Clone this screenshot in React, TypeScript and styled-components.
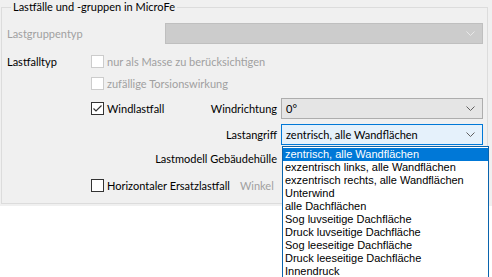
import styled, { createGlobalStyle } from 'styled-components'

const GlobalStyle = createGlobalStyle`
  html, body {
    margin: 0;
    padding: 0;
    background: #ffffff;
  }
  body {
    font-family: Lato, 'Liberation Sans', sans-serif;
    font-size: 11px;
    color: #000000;
  }
`

const Window = styled.div`
  width: 492px;
  height: 277px;
  overflow: hidden;
  background: #ffffff;
`

const Panel = styled.div`
  background: #f0f0f0;
  height: 206px;
  padding: 0 4px 0 1px;
  box-sizing: border-box;
`

const GroupBox = styled.fieldset`
  margin: 0;
  border: 1px solid #dcdcdc;
  padding: 9px 4px 10px 5px;
  height: 204px;
  box-sizing: border-box;
  display: flex;
  flex-direction: column;
`

const Legend = styled.legend`
  padding: 0 2px;
  margin-left: 4px;
  line-height: 14px;
`

const Row = styled.div<{ $h: number; $mt?: number }>`
  display: flex;
  align-items: center;
  height: ${({ $h }) => $h}px;
  margin-top: ${({ $mt }) => $mt ?? 0}px;
  position: relative;
`

const Label = styled.span<{ $disabled?: boolean; $w?: number }>`
  color: ${({ $disabled }) => ($disabled ? '#a0a0a0' : '#000000')};
  width: ${({ $w }) => ($w ? `${$w}px` : 'auto')};
  white-space: nowrap;
  flex-shrink: 0;
`

const SideLabel = styled(Label)<{ $mr: number }>`
  margin-left: auto;
  margin-right: ${({ $mr }) => $mr}px;
`

const CheckRow = styled.label<{ $disabled?: boolean }>`
  display: flex;
  align-items: center;
  gap: 3px;
  color: ${({ $disabled }) => ($disabled ? '#a0a0a0' : '#000000')};
  white-space: nowrap;
`

const Box = styled.span<{ $disabled?: boolean }>`
  width: 13px;
  height: 13px;
  box-sizing: border-box;
  border: 1px solid ${({ $disabled }) => ($disabled ? '#cccccc' : '#333333')};
  background: #ffffff;
  display: inline-flex;
  align-items: center;
  justify-content: center;
  flex-shrink: 0;
`

const Combo = styled.div<{ $variant: 'disabled' | 'normal' | 'focused'; $w: number }>`
  width: ${({ $w }) => $w}px;
  height: 21px;
  box-sizing: border-box;
  display: flex;
  align-items: center;
  justify-content: space-between;
  padding: 0 7px 0 4px;
  position: relative;
  background: ${({ $variant }) =>
    $variant === 'disabled' ? '#cccccc' : $variant === 'focused' ? '#e5f1fb' : '#e5e5e5'};
  border: 1px solid
    ${({ $variant }) =>
      $variant === 'disabled' ? '#bfbfbf' : $variant === 'focused' ? '#0078d7' : '#adadad'};
`

const DropList = styled.ul`
  position: absolute;
  top: 21px;
  left: 0;
  width: 207px;
  margin: 0;
  padding: 1px 0 0 0;
  list-style: none;
  background: #ffffff;
  border: 1px solid #0a64ad;
  box-sizing: border-box;
  font-family: 'Liberation Sans', Arial, sans-serif;
  font-size: 11px;
  z-index: 5;
`

const Item = styled.li<{ $selected?: boolean }>`
  height: 13px;
  line-height: 13px;
  padding-left: 2px;
  white-space: nowrap;
  background: ${({ $selected }) => ($selected ? '#0078d7' : 'transparent')};
  color: ${({ $selected }) => ($selected ? '#ffffff' : '#000000')};
`

const Chevron = ({ color }: { color: string }) => (
  <svg width="9" height="5" viewBox="0 0 9 5">
    <path d="M0.5 0.5 L4.5 4.5 L8.5 0.5" fill="none" stroke={color} strokeWidth="1" />
  </svg>
)

const Check = () => (
  <svg width="11" height="11" viewBox="0 0 11 11">
    <path d="M1.5 5.5 L4 8 L9.5 2.5" fill="none" stroke="#333333" strokeWidth="1.2" />
  </svg>
)

const options = [
  'zentrisch, alle Wandflächen',
  'exzentrisch links, alle Wandflächen',
  'exzentrisch rechts, alle Wandflächen',
  'Unterwind',
  'alle Dachflächen',
  'Sog luvseitige Dachfläche',
  'Druck luvseitige Dachfläche',
  'Sog leeseitige Dachfläche',
  'Druck leeseitige Dachfläche',
  'Innendruck',
]

const App = (): JSX.Element => {
  return (
    <Window>
      <GlobalStyle />
      <Panel>
        <GroupBox>
          <Legend>Lastfälle und -gruppen in MicroFe</Legend>
          <Row $h={21}>
            <Label $disabled $w={158}>Lastgruppentyp</Label>
            <Combo $variant="disabled" $w={318}>
              <span />
              <Chevron color="#e8e8e8" />
            </Combo>
          </Row>
          <Row $h={13} $mt={11}>
            <Label $w={84}>Lastfalltyp</Label>
            <CheckRow $disabled>
              <Box $disabled />
              nur als Masse zu berücksichtigen
            </CheckRow>
          </Row>
          <Row $h={13} $mt={9}>
            <Label $w={84} />
            <CheckRow $disabled>
              <Box $disabled />
              zufällige Torsionswirkung
            </CheckRow>
          </Row>
          <Row $h={21} $mt={8}>
            <Label $w={84} />
            <CheckRow>
              <Box>
                <Check />
              </Box>
              Windlastfall
            </CheckRow>
            <SideLabel $mr={4}>Windrichtung</SideLabel>
            <Combo $variant="normal" $w={202}>
              <span>0°</span>
              <Chevron color="#606060" />
            </Combo>
          </Row>
          <Row $h={22} $mt={4}>
            <SideLabel $mr={4}>Lastangriff</SideLabel>
            <Combo $variant="focused" $w={202}>
              <span>zentrisch, alle Wandflächen</span>
              <Chevron color="#606060" />
              <DropList>
                {options.map((o, i) => (
                  <Item key={o} $selected={i === 0}>
                    {o}
                  </Item>
                ))}
              </DropList>
            </Combo>
          </Row>
          <Row $h={16} $mt={5}>
            <SideLabel $mr={206}>Lastmodell Gebäudehülle</SideLabel>
          </Row>
          <Row $h={13} $mt={13}>
            <Label $w={84} />
            <CheckRow>
              <Box />
              Horizontaler Ersatzlastfall
            </CheckRow>
            <Label $disabled style={{ marginLeft: 10 }}>Winkel</Label>
          </Row>
        </GroupBox>
      </Panel>
    </Window>
  )
}

export default App
